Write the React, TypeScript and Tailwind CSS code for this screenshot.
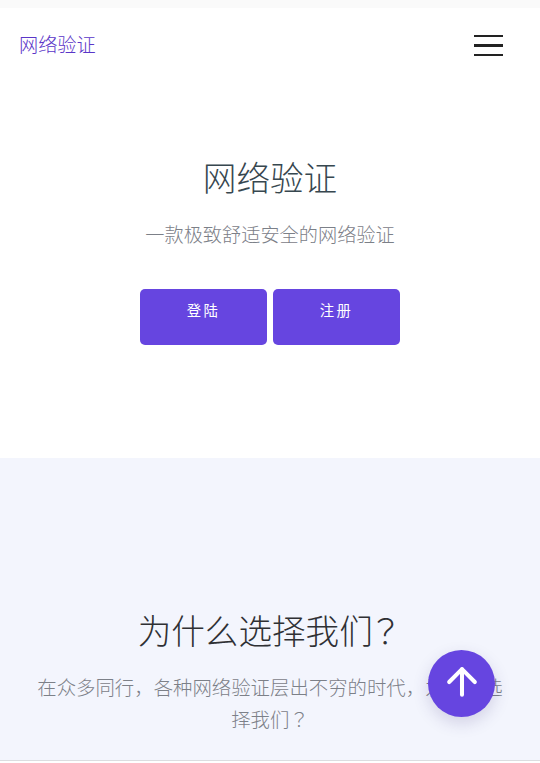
import { ArrowUp } from "lucide-react";

const cjk = "font-['Roboto','Noto_Sans_CJK_SC',sans-serif]";
const jpMark = "font-['Noto_Sans_CJK_JP',sans-serif]";

export default function App() {
  return (
    <div className={`relative h-[763px] w-[540px] overflow-hidden bg-white ${cjk}`}>
      <div className="h-2 bg-[#fafafa]" />

      <nav className="flex h-[76px] items-center justify-between pl-[19px] pr-[37px]">
        <a className="text-[19.2px] font-light text-[#5a36c8]">网络验证</a>
        <button className="-mt-[1px] flex w-[29px] flex-col gap-[7px]">
          <span className="h-[2.5px] bg-[#222]" />
          <span className="h-[2.5px] bg-[#222]" />
          <span className="h-[2.5px] bg-[#222]" />
        </button>
      </nav>

      <section className="flex h-[374px] flex-col items-center pt-[71px]">
        <h1 className="text-[33.6px] leading-[50px] font-light text-[#37474f]">网络验证</h1>
        <p className="mt-[16px] text-[19.2px] leading-[30px] font-light text-[#7c8088]">一款极致舒适安全的网络验证</p>
        <div className="mt-[38px] flex gap-[6px]">
          <button className="h-[56px] w-[127px] rounded-[5px] bg-[#6645e0] pb-[10px] text-[14.4px] tracking-[2.4px] text-white">登陆</button>
          <button className="h-[56px] w-[127px] rounded-[5px] bg-[#6645e0] pb-[10px] text-[14.4px] tracking-[2.4px] text-white">注册</button>
        </div>
      </section>

      <section className="flex h-[303px] flex-col items-center border-b border-[#dcdde0] bg-[#f3f5fd] px-[36px] pt-[147px]">
        <h2 className="text-[33.6px] leading-[50px] font-light text-[#2f3034]">
          为什么选择我们<span className={`-ml-[4px] ${jpMark}`}>？</span>
        </h2>
        <p className="mt-[16px] text-center text-[19.4px] leading-[30px] font-light text-[#7c8088]">
          在众多同行，各种网络验证层出不穷的时代，为什么选
          <br />
          择我们<span className={jpMark}>？</span>
        </p>
      </section>

      <button className="absolute top-[650px] left-[428px] flex size-[67px] items-center justify-center rounded-full bg-[#6645e0] pb-[3px] text-white shadow-[0_6px_16px_rgba(60,50,120,0.18)]">
        <ArrowUp size={44} strokeWidth={2.2} />
      </button>
    </div>
  );
}
